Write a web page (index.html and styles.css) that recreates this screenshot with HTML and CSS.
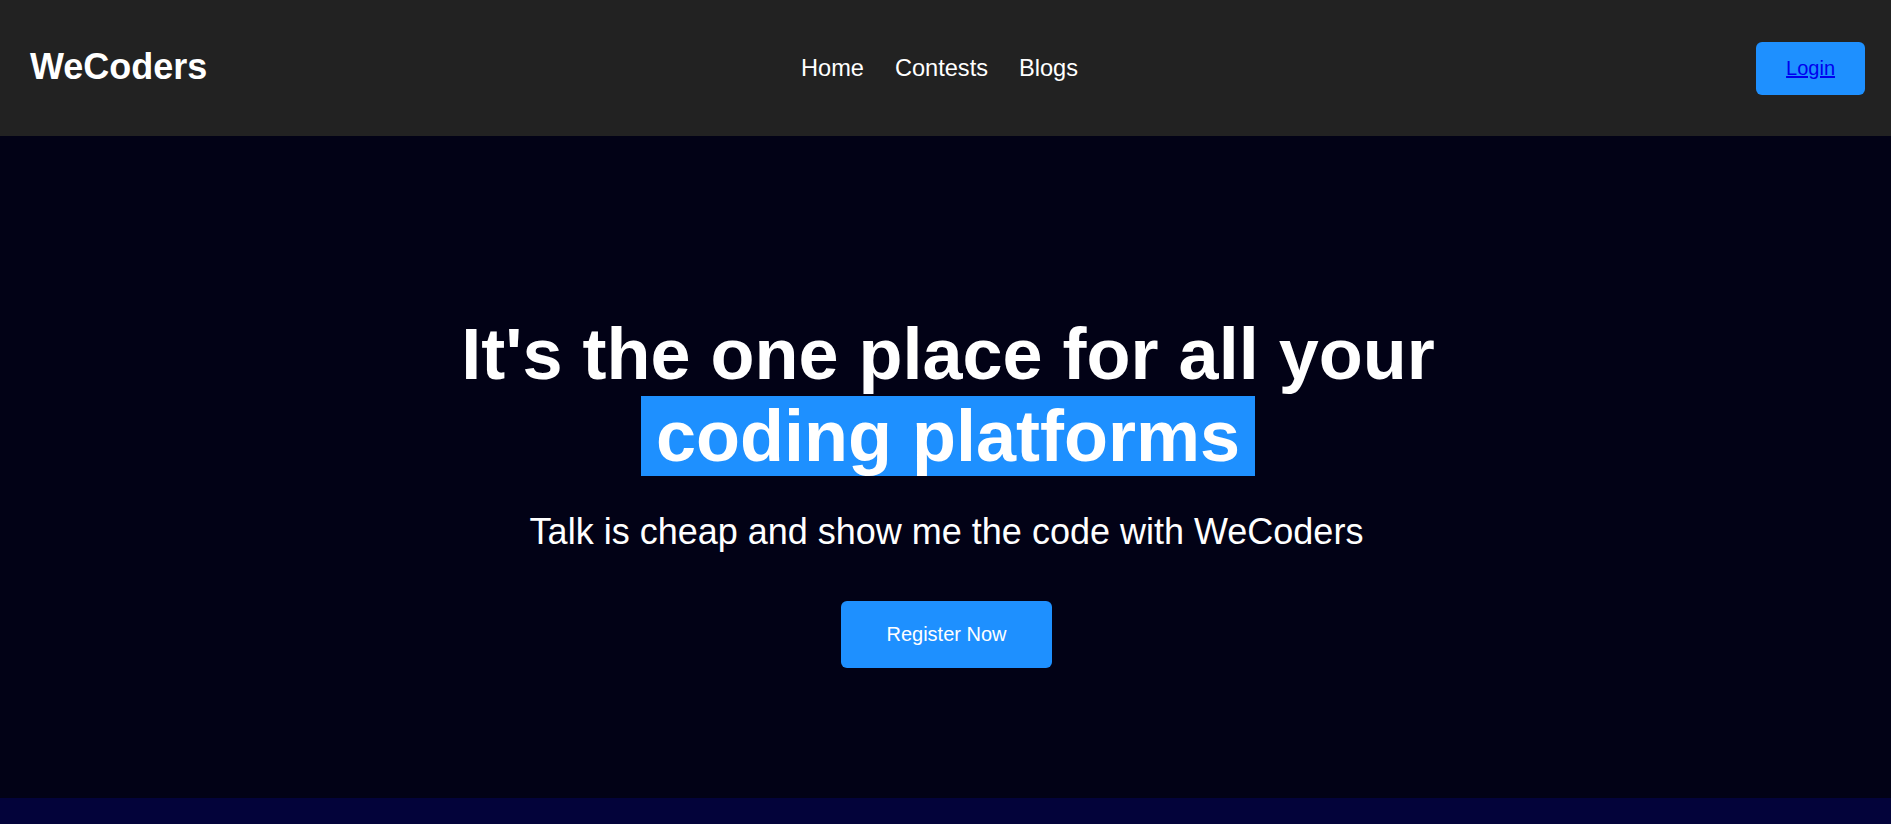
FILE: index.html
```html
<!DOCTYPE html>
<html lang="en">
<head>
<meta charset="utf-8">
<title>WeCoders</title>
<link rel="stylesheet" href="styles.css">
</head>
<body>
<header class="topbar">
  <div class="brand">WeCoders</div>
  <nav class="nav">
    <span class="nav-link">Home</span>
    <span class="nav-link">Contests</span>
    <span class="nav-link">Blogs</span>
  </nav>
  <div class="actions">
    <button class="login-btn"><a href="#" class="login-link">Login</a></button>
  </div>
</header>
<main class="hero">
  <h1 class="hero-title">It's the one place for all your <span class="highlight">coding platforms</span></h1>
  <p class="hero-sub">Talk is cheap and show me the code with WeCoders</p>
  <button class="register-btn">Register Now</button>
</main>
<section class="strip"></section>
</body>
</html>
```
FILE: styles.css
```css
* { box-sizing: border-box; }
html, body {
  margin: 0;
  padding: 0;
  background: #020216;
  font-family: "Liberation Sans", Arial, sans-serif;
  overflow: hidden;
}
.topbar {
  height: 136px;
  background: #222222;
  display: flex;
  align-items: center;
  padding: 0 26px 0 30px;
}
.brand {
  flex: 1;
  color: #ffffff;
  font-size: 36px;
  font-weight: bold;
  padding-bottom: 2px;
}
.nav {
  display: flex;
  gap: 31px;
  margin-right: 16px;
}
.nav-link {
  color: #ffffff;
  font-size: 23.6px;
}
.actions {
  flex: 1;
  display: flex;
  justify-content: flex-end;
}
.login-btn {
  background: #1e90ff;
  border: none;
  border-radius: 6px;
  padding: 15px 30px;
  font-family: "Liberation Sans", Arial, sans-serif;
  font-size: 20px;
  line-height: 23px;
  height: 53px;
}
.login-link {
  color: #0000ee;
  text-decoration: underline;
}
.hero {
  height: 662px;
  background: #020216;
  padding-top: 177px;
  text-align: center;
}
.hero-title {
  max-width: 1000px;
  margin: 0 auto;
  padding-left: 5px;
  color: #ffffff;
  font-size: 72px;
  font-weight: bold;
  line-height: normal;
}
.highlight {
  background: #1e90ff;
  padding: 0 15px;
}
.hero-sub {
  margin: 34px 0 0;
  padding-left: 2px;
  color: #ffffff;
  font-size: 36px;
  line-height: normal;
}
.register-btn {
  margin-top: 48px;
  margin-left: 2px;
  background: #1e90ff;
  color: #ffffff;
  border: none;
  border-radius: 6px;
  padding: 22px 45px;
  font-family: "Liberation Sans", Arial, sans-serif;
  font-size: 20px;
  line-height: 23px;
}
.strip {
  height: 26px;
  background: #03033a;
}
```
